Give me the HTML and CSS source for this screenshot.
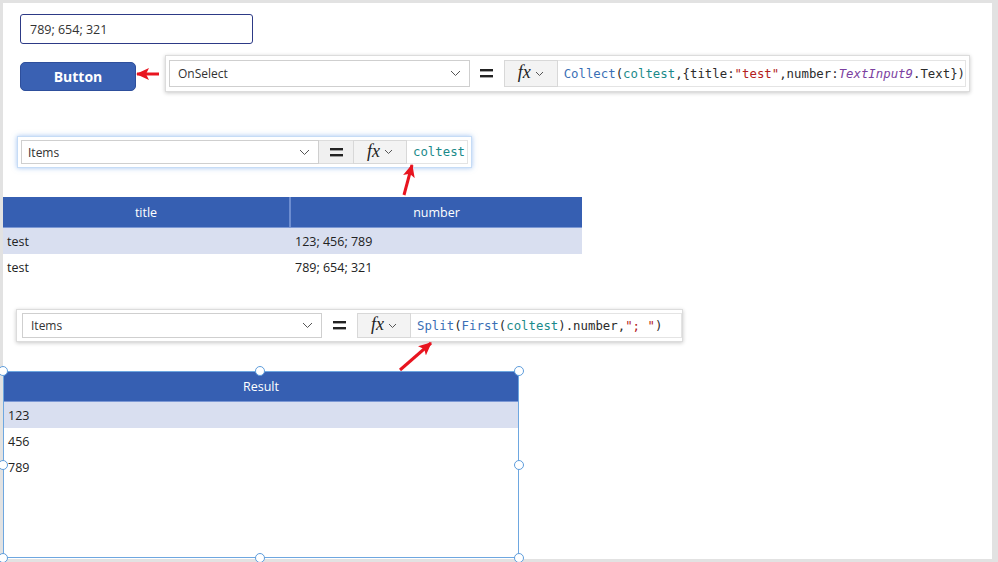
FILE: index.html
```html
<!DOCTYPE html>
<html>
<head>
<meta charset="utf-8">
<link rel="stylesheet" href="styles.css">
</head>
<body>
<div class="canvas">
  <div class="textinput">789; 654; 321</div>
  <div class="button">Button</div>

  <div class="fbar bar1">
    <div class="dropdown"><span>OnSelect</span><svg class="chev" width="11" height="7" viewBox="0 0 11 7"><path d="M1 1 L5.5 5.5 L10 1" fill="none" stroke="#555" stroke-width="1"/></svg></div>
    <div class="eq"><svg width="13" height="9" viewBox="0 0 13 9"><rect x="0" y="0" width="13" height="2.4" fill="#222"/><rect x="0" y="6" width="13" height="2.4" fill="#222"/></svg></div>
    <div class="fx"><span class="fxt">fx</span><svg width="9" height="6" viewBox="0 0 9 6"><path d="M1 1 L4.5 4.5 L8 1" fill="none" stroke="#555" stroke-width="1"/></svg></div>
    <div class="formula"><span class="fn">Collect</span>(<span class="col">coltest</span>,{title:<span class="str">"test"</span>,number:<span class="ctl">TextInput9</span>.Text})</div>
  </div>

  <div class="fbar bar2">
    <div class="dropdown"><span>Items</span><svg class="chev" width="11" height="7" viewBox="0 0 11 7"><path d="M1 1 L5.5 5.5 L10 1" fill="none" stroke="#555" stroke-width="1"/></svg></div>
    <div class="eq grey"><svg width="13" height="9" viewBox="0 0 13 9"><rect x="0" y="0" width="13" height="2.4" fill="#222"/><rect x="0" y="6" width="13" height="2.4" fill="#222"/></svg></div>
    <div class="fx"><span class="fxt">fx</span><svg width="9" height="6" viewBox="0 0 9 6"><path d="M1 1 L4.5 4.5 L8 1" fill="none" stroke="#555" stroke-width="1"/></svg></div>
    <div class="formula"><span class="col">coltest</span></div>
  </div>

  <div class="table1">
    <div class="trow thead"><div class="c1">title</div><div class="c2">number</div></div>
    <div class="trow alt"><div class="c1">test</div><div class="c2">123; 456; 789</div></div>
    <div class="trow"><div class="c1">test</div><div class="c2">789; 654; 321</div></div>
  </div>

  <div class="fbar bar3">
    <div class="dropdown"><span>Items</span><svg class="chev" width="11" height="7" viewBox="0 0 11 7"><path d="M1 1 L5.5 5.5 L10 1" fill="none" stroke="#555" stroke-width="1"/></svg></div>
    <div class="eq"><svg width="13" height="9" viewBox="0 0 13 9"><rect x="0" y="0" width="13" height="2.4" fill="#222"/><rect x="0" y="6" width="13" height="2.4" fill="#222"/></svg></div>
    <div class="fx"><span class="fxt">fx</span><svg width="9" height="6" viewBox="0 0 9 6"><path d="M1 1 L4.5 4.5 L8 1" fill="none" stroke="#555" stroke-width="1"/></svg></div>
    <div class="formula"><span class="fn">Split</span>(<span class="fn">First</span>(<span class="col">coltest</span>).number,<span class="str">"; "</span>)</div>
  </div>

  <div class="gallery">
    <div class="ghead">Result</div>
    <div class="grow alt">123</div>
    <div class="grow">456</div>
    <div class="grow">789</div>
  </div>

  <div class="handle" style="left:-5px;top:363px"></div>
  <div class="handle" style="left:252px;top:363px"></div>
  <div class="handle" style="left:511px;top:363px"></div>
  <div class="handle" style="left:-5px;top:457px"></div>
  <div class="handle" style="left:511px;top:457px"></div>
  <div class="handle" style="left:-5px;top:550px"></div>
  <div class="handle" style="left:252px;top:550px"></div>
  <div class="handle" style="left:511px;top:550px"></div>

  <svg class="arrows" width="989" height="556" viewBox="0 0 989 556">
    <defs>
      <marker id="ah" markerUnits="userSpaceOnUse" markerWidth="13" markerHeight="12" refX="12" refY="6" orient="auto">
        <path d="M0 0 L13 6 L0 12 L3 6 z" fill="#e8141f"/>
      </marker>
    </defs>
    <line x1="156" y1="71" x2="134" y2="71" stroke="#e8141f" stroke-width="3" marker-end="url(#ah)"/>
    <line x1="401" y1="192" x2="409" y2="162" stroke="#e8141f" stroke-width="3" marker-end="url(#ah)"/>
    <line x1="397" y1="367" x2="428" y2="340" stroke="#e8141f" stroke-width="3" marker-end="url(#ah)"/>
  </svg>
</div>
</body>
</html>
```

FILE: styles.css
```css
html, body {
  margin: 0;
  padding: 0;
}
body {
  background: #e2e2e2;
  width: 998px;
  height: 562px;
  box-sizing: border-box;
  padding: 3px 6px 3px 3px;
  overflow: hidden;
  font-family: "Open Sans", "Noto Sans", sans-serif;
  color: #333;
}
.canvas {
  position: relative;
  width: 989px;
  height: 556px;
  background: #fff;
}
.textinput {
  position: absolute;
  left: 17px;
  top: 11px;
  width: 233px;
  height: 30px;
  box-sizing: border-box;
  border: 1.5px solid #2d3a86;
  border-radius: 3px;
  padding-left: 9px;
  display: flex;
  align-items: center;
  font-size: 12.5px;
  color: #333;
}
.button {
  position: absolute;
  left: 17px;
  top: 59px;
  width: 116px;
  height: 29px;
  box-sizing: border-box;
  background: #3a61b3;
  border: 1px solid #2e4f9c;
  border-radius: 5px;
  color: #fff;
  font-weight: 700;
  font-size: 14px;
  display: flex;
  align-items: center;
  justify-content: center;
}
.fbar {
  position: absolute;
  display: flex;
  align-items: stretch;
  background: #fff;
  box-sizing: border-box;
}
.bar1 {
  left: 162px;
  top: 52px;
  width: 805px;
  height: 37px;
  padding: 4px 3px;
  border: 1px solid #dcdcdc;
  box-shadow: 0 1px 4px rgba(0,0,0,0.22);
}
.bar2 {
  left: 14px;
  top: 133px;
  width: 455px;
  height: 32px;
  padding: 3px 3px;
  border: 1px solid #c6dcf6;
  box-shadow: 0 0 5px rgba(90,150,230,0.55);
}
.bar3 {
  left: 13px;
  top: 306px;
  width: 667px;
  height: 33px;
  padding: 3px 0 3px 5px;
  border: 1px solid #dcdcdc;
  box-shadow: 0 1px 4px rgba(0,0,0,0.22);
}
.dropdown {
  display: flex;
  align-items: center;
  justify-content: space-between;
  box-sizing: border-box;
  border: 1px solid #cfcfcf;
  background: #fff;
  padding: 0 8px 0 8px;
  font-size: 12px;
  color: #333;
}
.bar1 .dropdown { width: 301px; }
.bar2 .dropdown { width: 298px; padding-left: 6px; }
.bar3 .dropdown { width: 300px; }
.eq {
  display: flex;
  align-items: center;
  justify-content: center;
  box-sizing: border-box;
  width: 34px;
}
.bar3 .eq { width: 35px; }
.eq.grey {
  background: #f0f0f0;
  border-top: 1px solid #dcdcdc;
  border-bottom: 1px solid #dcdcdc;
}
.fx {
  display: flex;
  align-items: center;
  justify-content: center;
  gap: 4px;
  box-sizing: border-box;
  width: 54px;
  background: #f3f3f3;
  border: 1px solid #d8d8d8;
}
.fxt {
  font-family: "Liberation Serif", serif;
  font-style: italic;
  font-size: 18px;
  color: #222;
  line-height: 1;
  margin-top: -3px;
}
.formula {
  flex: 1;
  display: flex;
  align-items: center;
  padding-left: 6px;
  font-family: "DejaVu Sans Mono", "Liberation Mono", monospace;
  font-size: 12.35px;
  color: #2b2b2b;
  white-space: pre;
  border-top: 1px solid #e4e4e4;
  border-bottom: 1px solid #e4e4e4;
  border-right: 1px solid #e4e4e4;
}
.fn { color: #3a6fb5; }
.col { color: #1b8a8a; }
.str { color: #b32020; }
.ctl { color: #7b3fa0; font-style: italic; }
.table1 {
  position: absolute;
  left: 0;
  top: 194px;
  width: 579px;
  display: flex;
  flex-direction: column;
}
.trow {
  display: grid;
  grid-template-columns: 288px 291px;
  height: 26px;
  align-items: center;
  font-size: 12.5px;
  color: #222;
}
.trow.thead {
  height: 31px;
  box-sizing: border-box;
  background: #365fb2;
  color: #fff;
  font-size: 12.5px;
  border-bottom: 1px solid #7c98d4;
}
.thead .c1, .thead .c2 {
  text-align: center;
  height: 100%;
  display: flex;
  align-items: center;
  justify-content: center;
}
.thead .c1 { border-right: 2px solid #6d8dd0; }
.trow .c1 { padding-left: 4px; }
.thead .c1 { padding-left: 0; }
.trow .c2 { padding-left: 4px; }
.thead .c2 { padding-left: 0; }
.alt { background: #d9dff0; }
.gallery {
  position: absolute;
  left: 0;
  top: 368px;
  width: 516px;
  height: 187px;
  box-sizing: border-box;
  border: 1.5px solid #6ea7e0;
}
.ghead {
  height: 30px;
  box-sizing: border-box;
  background: #365fb2;
  color: #fff;
  font-size: 12.5px;
  display: flex;
  align-items: center;
  justify-content: center;
  border-bottom: 1px solid #7c98d4;
}
.grow {
  height: 26px;
  display: flex;
  align-items: center;
  padding-left: 4px;
  font-size: 12.5px;
  color: #222;
}
.handle {
  position: absolute;
  width: 10px;
  height: 10px;
  box-sizing: border-box;
  border-radius: 50%;
  border: 1.5px solid #5e9ddc;
  background: #fff;
}
.arrows {
  position: absolute;
  left: 0;
  top: 0;
  pointer-events: none;
}
```
